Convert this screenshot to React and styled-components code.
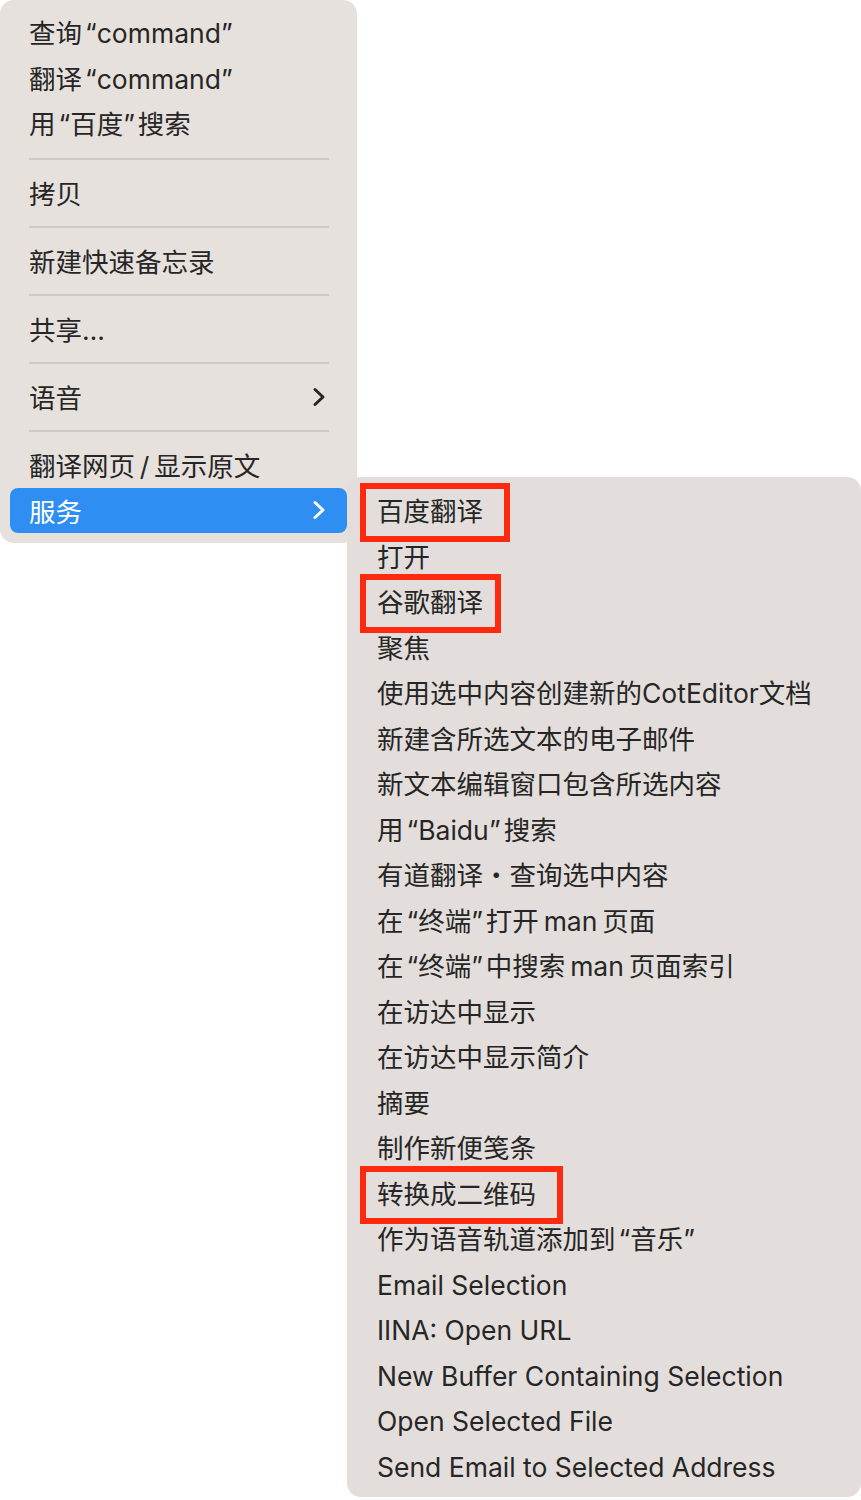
import React from 'react'
import styled, { createGlobalStyle } from 'styled-components'

const GlobalStyle = createGlobalStyle`
  body {
    margin: 0;
    background: #ffffff;
    font-family: Inter, "Noto Sans CJK SC", sans-serif;
  }
`

const Stage = styled.div`
  display: flex;
  align-items: flex-start;
  width: 861px;
  height: 1500px;
`

const Menu = styled.div`
  flex: none;
  box-sizing: border-box;
  width: 357px;
  padding: 11px 10px 10px;
  background: #e6e1dd;
  border-radius: 14px;
`

const SubMenu = styled.div`
  position: relative;
  z-index: 1;
  flex: none;
  box-sizing: border-box;
  width: 514px;
  margin-top: 477px;
  margin-left: -10px;
  padding: 12px 10px 7px;
  background: #e3dedb;
  border-radius: 14px;
`

const Item = styled.div`
  display: flex;
  align-items: center;
  justify-content: space-between;
  height: 45.5px;
  padding: 0 21px 0 ${p => (p.$sub ? 20 : 19)}px;
  border-radius: 8px;
  font-size: 26.5px;
  color: ${p => (p.$active ? '#ffffff' : '#262626')};
  background: ${p => (p.$active ? '#2f8ef1' : 'transparent')};
  white-space: nowrap;
`

const Label = styled.span`
  position: relative;
  display: inline-block;
  line-height: 45.5px;
`

const Quote = styled.span`
  margin: ${p => (p.$open ? '0 0 0 3px' : '0 3px 0 0')};
`

const Mark = styled.span`
  position: absolute;
  top: -6px;
  bottom: -7px;
  left: -17px;
  width: ${p => p.$w}px;
  box-sizing: border-box;
  border: 6px solid #fd2a10;
  pointer-events: none;
`

const Separator = styled.div`
  height: 22.5px;
  display: flex;
  align-items: center;
  padding: 0 18px 0 19px;

  &::before {
    content: '';
    flex: 1;
    height: 2px;
    background: #cfcac6;
  }
`

const Chevron = ({ color }) => (
  <svg width="14" height="20" viewBox="0 0 14 20">
    <path
      d="M3 2.5 L11 10 L3 17.5"
      fill="none"
      stroke={color}
      strokeWidth="3"
      strokeLinecap="round"
      strokeLinejoin="round"
    />
  </svg>
)

const Text = ({ children }) => (
  <Label>
    {children.split(/([“”])/).map((part, i) =>
      part === '“' || part === '”' ? (
        <Quote key={i} $open={part === '“'}>
          {part}
        </Quote>
      ) : (
        part
      )
    )}
  </Label>
)

const services = [
  { text: '百度翻译', mark: 150 },
  { text: '打开' },
  { text: '谷歌翻译', mark: 141 },
  { text: '聚焦' },
  { text: '使用选中内容创建新的CotEditor文档' },
  { text: '新建含所选文本的电子邮件' },
  { text: '新文本编辑窗口包含所选内容' },
  { text: '用“Baidu”搜索' },
  { text: '有道翻译・查询选中内容' },
  { text: '在“终端”打开\u2009man\u2009页面' },
  { text: '在“终端”中搜索\u2009man\u2009页面索引' },
  { text: '在访达中显示' },
  { text: '在访达中显示简介' },
  { text: '摘要' },
  { text: '制作新便笺条' },
  { text: '转换成二维码', mark: 203 },
  { text: '作为语音轨道添加到“音乐”' },
  { text: 'Email Selection' },
  { text: 'IINA: Open URL' },
  { text: 'New Buffer Containing Selection' },
  { text: 'Open Selected File' },
  { text: 'Send Email to Selected Address' },
]

export default function App() {
  return (
    <>
      <GlobalStyle />
      <Stage>
        <Menu>
          <Item><Text>查询“command”</Text></Item>
          <Item><Text>翻译“command”</Text></Item>
          <Item><Text>用“百度”搜索</Text></Item>
          <Separator />
          <Item>拷贝</Item>
          <Separator />
          <Item>新建快速备忘录</Item>
          <Separator />
          <Item>共享…</Item>
          <Separator />
          <Item>
            语音
            <Chevron color="#262626" />
          </Item>
          <Separator />
          <Item>翻译网页{'\u2009/\u2009'}显示原文</Item>
          <Item $active>
            服务
            <Chevron color="#ffffff" />
          </Item>
        </Menu>
        <SubMenu>
          {services.map(s => (
            <Item $sub key={s.text}>
              <Label>
                <Text>{s.text}</Text>
                {s.mark && <Mark $w={s.mark} />}
              </Label>
            </Item>
          ))}
        </SubMenu>
      </Stage>
    </>
  )
}
